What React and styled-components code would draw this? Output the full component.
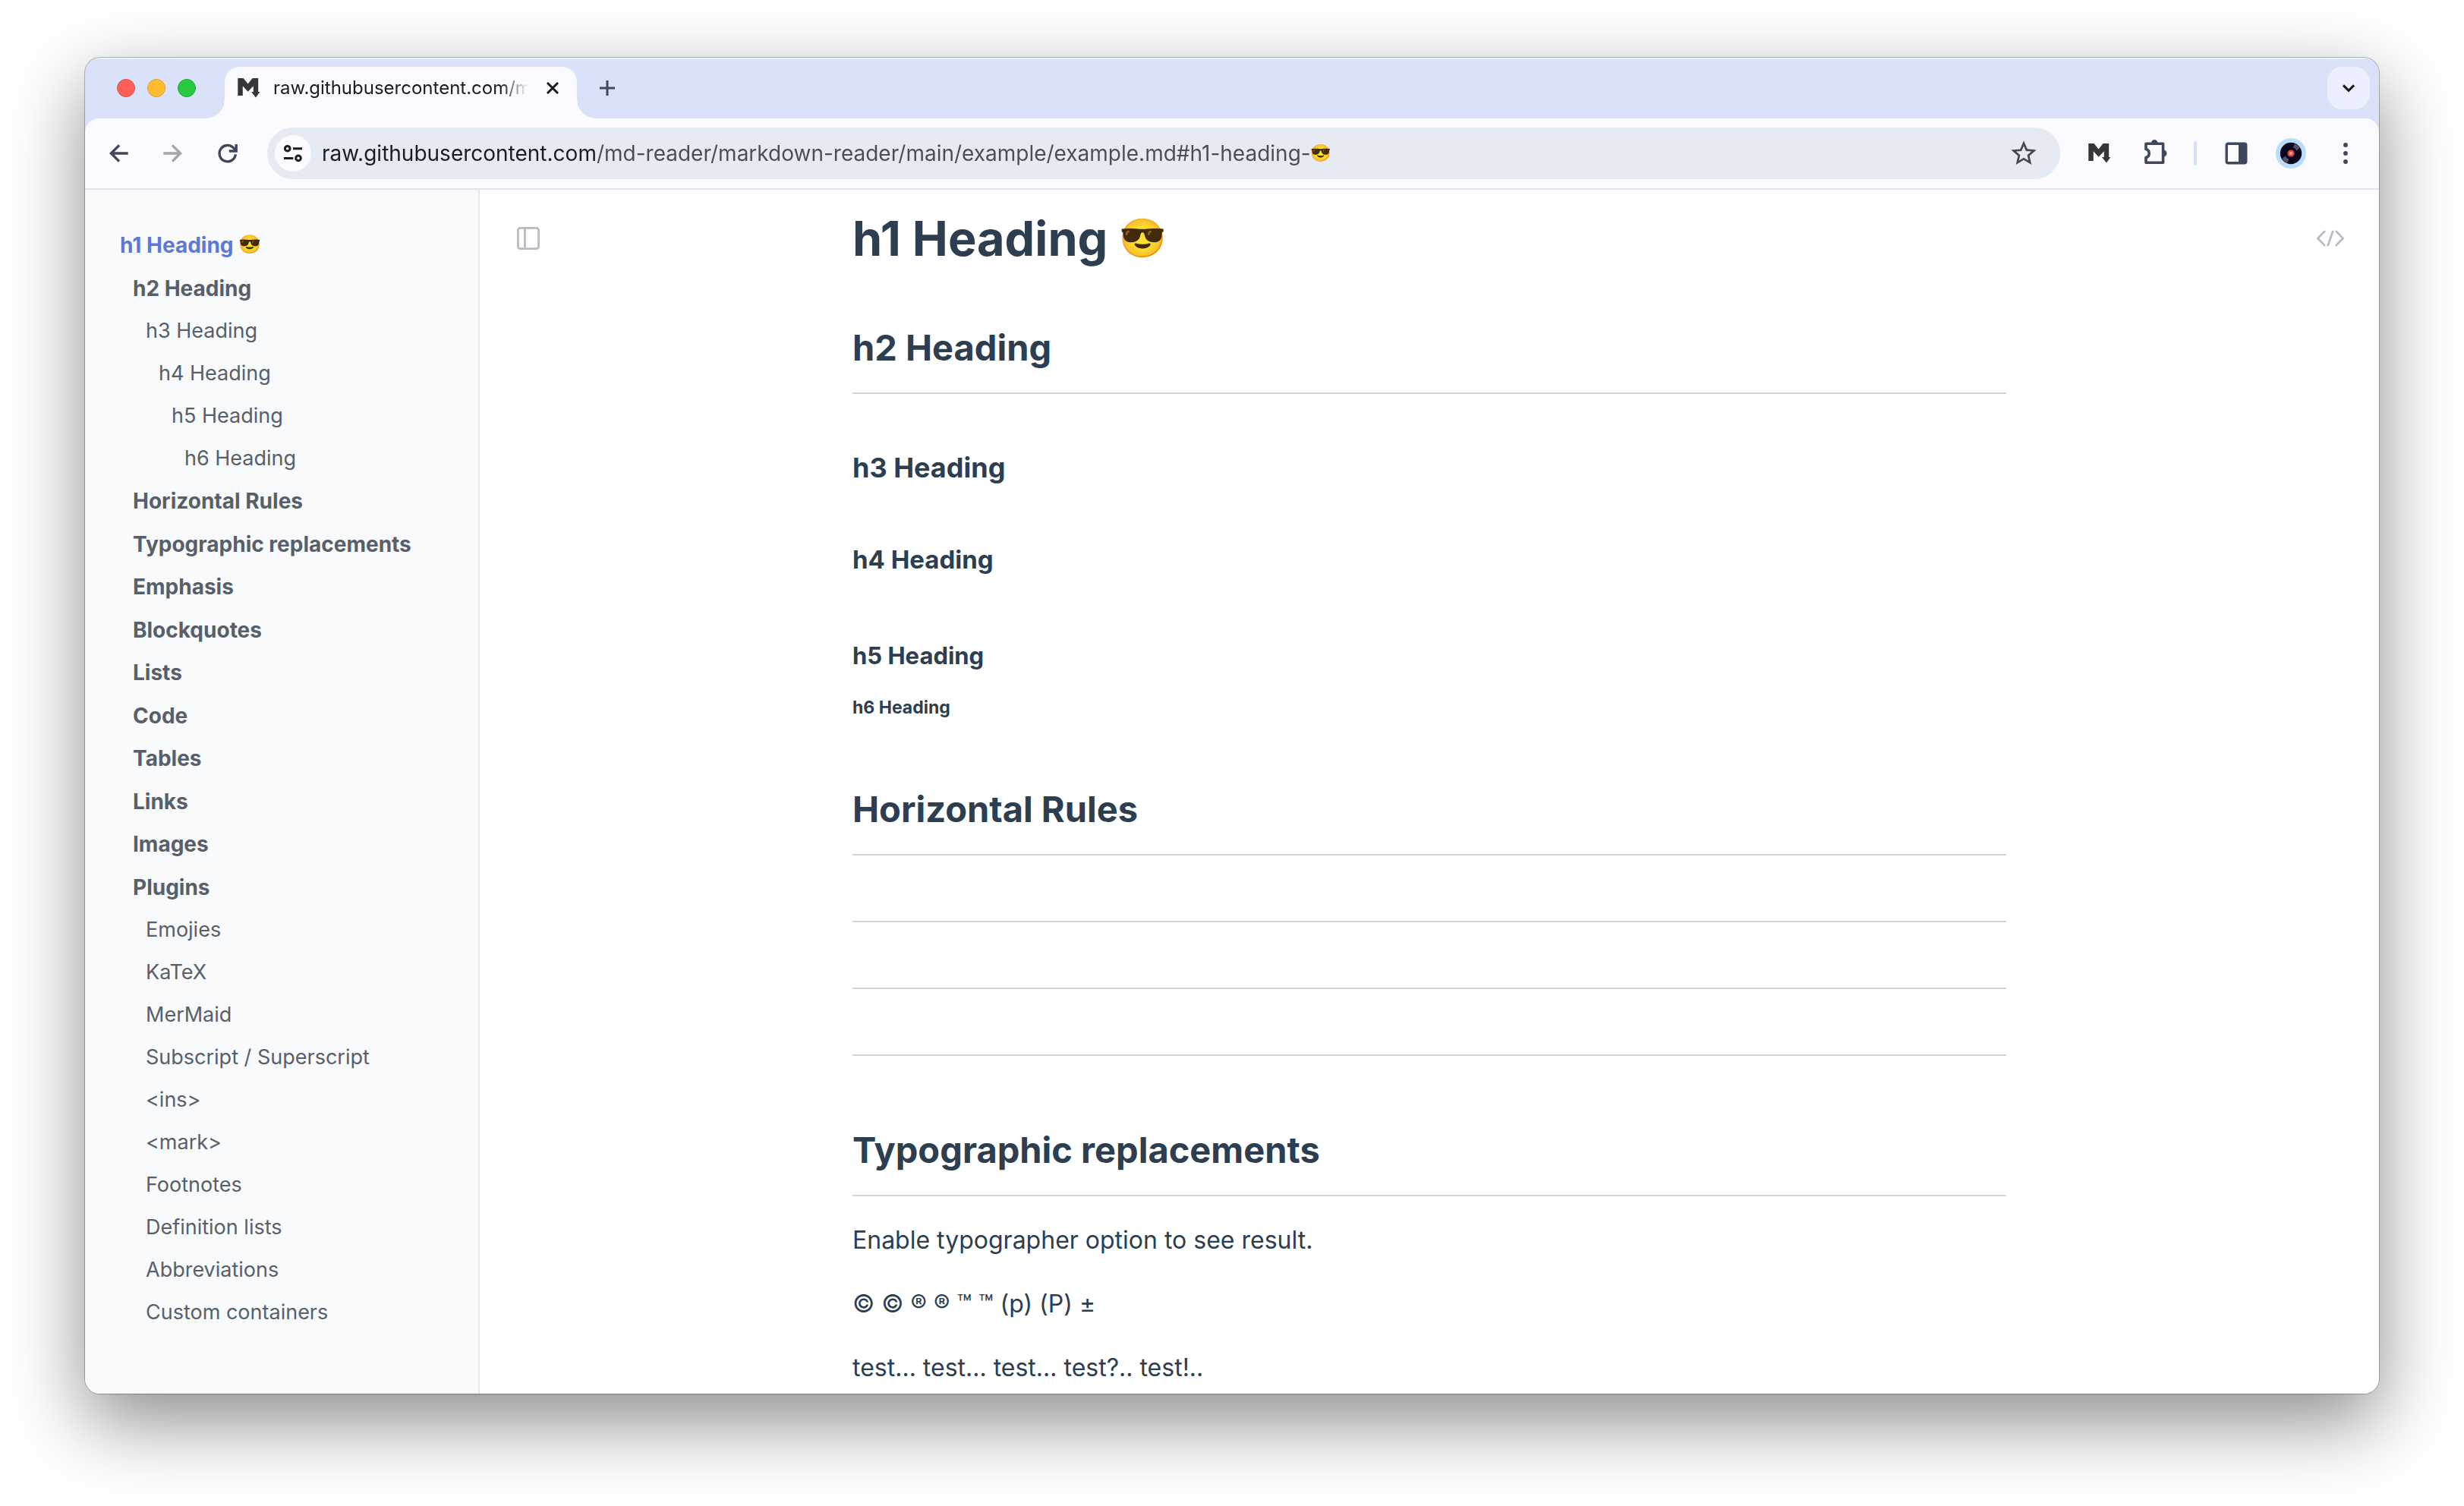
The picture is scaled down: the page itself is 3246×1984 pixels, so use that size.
import React from "react";
import styled, { createGlobalStyle, css } from "styled-components";

const GlobalStyle = createGlobalStyle`
  *, *::before, *::after { box-sizing: border-box; }
  body {
    margin: 0;
    background: #ffffff;
    font-family: Inter, "Noto Sans", "Liberation Sans", sans-serif;
    -webkit-font-smoothing: antialiased;
  }
`;

/* ---------- window ---------- */

const Desktop = styled.div`
  height: 100vh;
  padding: 76px 112px 148px;
  overflow: hidden;
`;

const Window = styled.div`
  display: flex;
  flex-direction: column;
  height: 100%;
  overflow: hidden;
  border-radius: 20px;
  background: #dae2fa;
  box-shadow:
    0 0 0 1px rgba(0, 0, 0, 0.26),
    0 36px 100px rgba(0, 0, 0, 0.46);
`;

/* ---------- tab strip ---------- */

const TabStrip = styled.header`
  display: flex;
  align-items: flex-end;
  height: 80px;
  flex-shrink: 0;
  padding: 0 12px 0 42px;
  box-shadow: inset 0 2px 1px rgba(255, 255, 255, 0.5);
`;

const TrafficLights = styled.div`
  display: flex;
  align-self: center;
  gap: 16px;
  margin-right: 38px;
`;

const Light = styled.button`
  width: 24px;
  height: 24px;
  padding: 0;
  border: 1px solid ${(p) => p.$edge};
  border-radius: 50%;
  background: ${(p) => p.$fill};
`;

const Tab = styled.div`
  position: relative;
  display: flex;
  align-items: center;
  gap: 16px;
  width: 464px;
  height: 68px;
  padding: 0 20px 12px 16px;
  border-radius: 20px 20px 0 0;
  background: #fafaff;

  &::before,
  &::after {
    content: "";
    position: absolute;
    bottom: 0;
    width: 24px;
    height: 24px;
  }
  &::before {
    right: 100%;
    background: radial-gradient(circle at 0 0, transparent 23px, #fafaff 24px);
  }
  &::after {
    left: 100%;
    background: radial-gradient(circle at 100% 0, transparent 23px, #fafaff 24px);
  }
`;

const TabTitle = styled.span`
  flex: 1;
  overflow: hidden;
  white-space: nowrap;
  color: #1b1c20;
  font-size: 24px;
  line-height: 32px;
  mask-image: linear-gradient(to right, #000 calc(100% - 40px), transparent calc(100% - 4px));
`;

const IconButton = styled.button`
  display: grid;
  place-items: center;
  flex-shrink: 0;
  width: ${(p) => p.$size || 56}px;
  height: ${(p) => p.$size || 56}px;
  padding: 0;
  border: 0;
  border-radius: 50%;
  background: transparent;
  color: ${(p) => p.$color || "#3f475a"};

  svg { display: block; }
`;

const NewTab = styled(IconButton)`
  margin: 0 auto 12px 12px;
`;

const TabSearch = styled(IconButton)`
  align-self: flex-start;
  margin-top: 12px;
  border-radius: 20px;
  background: #ecf0fe;
`;

/* ---------- toolbar ---------- */

const Toolbar = styled.div`
  display: flex;
  align-items: center;
  gap: 16px;
  height: 94px;
  flex-shrink: 0;
  padding: 0 16px;
  border-bottom: 2px solid #dfe3ec;
  border-radius: 18px 18px 0 0;
  background: #fafaff;
`;

const Omnibox = styled.form`
  display: flex;
  flex: 1;
  align-items: center;
  height: 68px;
  min-width: 0;
  margin: 0 8px;
  padding: 0 20px 0 10px;
  border-radius: 34px;
  background: #e6eaf3;
`;

const SiteInfo = styled(IconButton)`
  margin-right: 14px;
  background: #fafaff;
`;

const Address = styled.input`
  field-sizing: content;
  min-width: 0;
  padding: 0;
  border: 0;
  outline: 0;
  font: 400 28px/40px Inter, "Liberation Sans", sans-serif;
  color: transparent;
  caret-color: #1b1c20;
  background: linear-gradient(to right, #1b1c20 362px, #4a4d55 362px);
  background-clip: text;
  -webkit-background-clip: text;
`;

const Bookmark = styled(IconButton)`
  margin-left: auto;
`;

const Divider = styled.span`
  width: 4px;
  height: 32px;
  margin: 0 8px;
  border-radius: 2px;
  background: #d3e3fd;
`;

const Emoji = styled.span`
  font: 400 ${(p) => p.$size}px/1 "Noto Color Emoji", sans-serif;
  vertical-align: 12%;
`;

/* ---------- page ---------- */

const Page = styled.div`
  display: flex;
  flex: 1;
  min-height: 0;
  background: #ffffff;
`;

const Sidebar = styled.nav`
  width: 520px;
  flex-shrink: 0;
  overflow: hidden;
  padding: 45px 0 0 46px;
  border-right: 2px solid #e6e8eb;
  background: #f9fafc;
`;

const Toc = styled.ul`
  margin: 0;
  padding: 0;
  list-style: none;
`;

const TocItem = styled.li`
  padding-left: ${(p) => (p.$level - 1) * 17}px;

  a {
    display: block;
    color: ${(p) => (p.$active ? "#5c79d8" : "#57606a")};
    font-size: 27px;
    line-height: 56px;
    text-decoration: none;
    white-space: nowrap;
  }

  ${(p) =>
    p.$level < 3 &&
    css`
      a { font-size: 28px; font-weight: 700; }
      &:nth-child(odd) a { line-height: 57px; }
    `}
`;

const Reader = styled.main`
  display: grid;
  flex: 1;
  grid-template-columns: 1fr minmax(0, 1520px) 1fr;
  align-items: start;
  min-width: 0;
  overflow: hidden;
`;

const SideAction = styled(IconButton)`
  justify-self: ${(p) => p.$side};
  margin: 36px;
`;

const Article = styled.article`
  padding-top: 24px;
  color: #2c3e50;

  h1, h2, h3, h4, h5, h6 { margin: 0; font-weight: 700; }

  h1 { font-size: 63px; line-height: 80px; }
  h2 {
    margin-top: 90px;
    padding-bottom: 29px;
    border-bottom: 2px solid #d0d7de;
    font-size: 47px;
    line-height: 60px;
  }
  h1 + h2 { margin-top: 74px; }
  hr + h2 { margin-top: 94px; }
  h3 { margin-top: 75px; font-size: 36px; line-height: 44px; }
  h4 { margin-top: 79px; font-size: 33px; line-height: 40px; }
  h5 { margin-top: 87px; font-size: 31px; line-height: 40px; }
  h6 { margin-top: 34px; font-size: 23px; line-height: 28px; }
  hr { height: 2px; margin: 86px 0 0; border: 0; background: #d0d7de; }
  p { margin: 34px 0 0; font-size: 32px; line-height: 48px; white-space: nowrap; }
  p + p { margin-top: 36px; }
`;

/* ---------- icons ---------- */

const stroke = { fill: "none", stroke: "currentColor", strokeWidth: 3.4 };

const MarkdownLogo = () => (
  <svg width="32" height="32" viewBox="0 0 32 32" aria-hidden="true">
    <path
      fill="#35363a"
      d="M1.3 3H8.6L14.6 10.4 20.6 3H28.2V21H30.4L25 28.6 19 21H21.8V13.2L14.6 20.8 7.8 13.2V26H1.3Z"
    />
  </svg>
);

const Back = () => (
  <svg width="32" height="32" viewBox="0 0 32 32" {...stroke}>
    <path d="M28.7 16H6.4M17 5.4 6.4 16 17 26.6" />
  </svg>
);

const Forward = () => (
  <svg width="32" height="32" viewBox="0 0 32 32" {...stroke}>
    <path d="M3.3 16H25.6M15 5.4 25.6 16 15 26.6" />
  </svg>
);

const Reload = () => (
  <svg width="32" height="32" viewBox="0 0 32 32" {...stroke}>
    <path d="M26.4 17.4A10.7 10.7 0 1 1 23.6 8.8L27 12" />
    <path d="M27.2 4V13H17.8" />
  </svg>
);

const Tune = () => (
  <svg width="32" height="32" viewBox="0 0 32 32" fill="none" stroke="currentColor" strokeWidth="3">
    <circle cx="8.7" cy="9.7" r="3.3" />
    <path d="M16 9.7H28M4 22.6H16.3" />
    <circle cx="23" cy="22.4" r="3.3" />
  </svg>
);

const Star = () => (
  <svg width="40" height="40" viewBox="0 0 24 24" fill="currentColor">
    <path d="M22 9.24l-7.19-.62L12 2 9.19 8.63 2 9.24l5.46 4.73L5.82 21 12 17.27 18.18 21l-1.63-7.03L22 9.24zM12 15.4l-3.76 2.27 1-4.28-3.32-2.88 4.38-.38L12 6.1l1.71 4.04 4.38.38-3.32 2.88 1 4.28L12 15.4z" />
  </svg>
);

const Puzzle = () => (
  <svg width="40" height="40" viewBox="-1 0 40 40">
    <path
      d="M8 7.2H30.6V32.2H8V25.6C10.6 25 12.2 22.8 12.2 20S10.6 15 8 14.4Z"
      fill="none"
      stroke="currentColor"
      strokeWidth="3.6"
      strokeLinejoin="round"
    />
    <path d="M15 6.2a4.2 4.2 0 0 1 8.4 0ZM32 15.8a4.4 4.4 0 0 1 0 8.6Z" fill="currentColor" />
  </svg>
);

const SidePanel = () => (
  <svg width="32" height="32" viewBox="0 0 32 32">
    <rect x="3.2" y="3.2" width="25.6" height="25.6" rx="2" fill="none" stroke="currentColor" strokeWidth="3.4" />
    <path d="M19 2.6H28V29.4H19Z" fill="currentColor" />
  </svg>
);

const Avatar = () => (
  <svg width="40" height="40" viewBox="0 0 40 40">
    <circle cx="20" cy="20" r="20" fill="#b9defb" />
    <circle cx="20" cy="20" r="14.2" fill="#08061c" />
    <path d="M22.6 12.2 25 7.2A13.6 13.6 0 0 1 31.6 13L27.6 16.4A8 8 0 0 0 22.6 12.2Z" fill="#6c6d7b" opacity=".75" />
    <path d="M17.4 27.8 15 32.8A13.6 13.6 0 0 1 8.4 27L12.4 23.6A8 8 0 0 0 17.4 27.8Z" fill="#6c6d7b" opacity=".75" />
    <circle cx="20" cy="20" r="4.6" fill="#f2386b" />
    <circle cx="20" cy="20" r="2" fill="#ffc93c" />
  </svg>
);

const Dots = () => (
  <svg width="32" height="32" viewBox="0 0 32 32" fill="currentColor">
    <circle cx="16" cy="5" r="2.9" />
    <circle cx="16" cy="16" r="2.9" />
    <circle cx="16" cy="27" r="2.9" />
  </svg>
);

const Chevron = () => (
  <svg width="24" height="24" viewBox="0 0 24 24" fill="none" stroke="currentColor" strokeWidth="3">
    <path d="M5 8.4 12 15.4 19 8.4" />
  </svg>
);

const Plus = () => (
  <svg width="24" height="24" viewBox="0 0 24 24" fill="none" stroke="currentColor" strokeWidth="3">
    <path d="M12 2V22M2 12H22" />
  </svg>
);

const Close = () => (
  <svg width="24" height="24" viewBox="0 0 24 24" fill="none" stroke="currentColor" strokeWidth="3">
    <path d="M5 5 19 19M19 5 5 19" />
  </svg>
);

const PanelToggle = () => (
  <svg width="36" height="36" viewBox="0 0 36 36" fill="none" stroke="currentColor" strokeWidth="2.8">
    <rect x="4.4" y="4.4" width="27.2" height="27.2" rx="3" />
    <path d="M13.4 4.4V31.6" />
  </svg>
);

const Code = () => (
  <svg width="40" height="40" viewBox="0 0 40 40" fill="none" stroke="currentColor" strokeWidth="2.8" strokeLinecap="round" strokeLinejoin="round">
    <path d="M12.2 10.9 3.4 20l8.8 9.1M27.8 10.9 36.6 20l-8.8 9.1M23.2 10.9 16.8 29.1" />
  </svg>
);

/* ---------- content ---------- */

const toc = [
  [1, "h1 Heading", true],
  [2, "h2 Heading"],
  [3, "h3 Heading"],
  [4, "h4 Heading"],
  [5, "h5 Heading"],
  [6, "h6 Heading"],
  [2, "Horizontal Rules"],
  [2, "Typographic replacements"],
  [2, "Emphasis"],
  [2, "Blockquotes"],
  [2, "Lists"],
  [2, "Code"],
  [2, "Tables"],
  [2, "Links"],
  [2, "Images"],
  [2, "Plugins"],
  [3, "Emojies"],
  [3, "KaTeX"],
  [3, "MerMaid"],
  [3, "Subscript / Superscript"],
  [3, "<ins>"],
  [3, "<mark>"],
  [3, "Footnotes"],
  [3, "Definition lists"],
  [3, "Abbreviations"],
  [3, "Custom containers"],
];

const url =
  "raw.githubusercontent.com/md-reader/markdown-reader/main/example/example.md#h1-heading-";

export default function App() {
  return (
    <>
      <GlobalStyle />
      <Desktop>
        <Window>
          <TabStrip>
            <TrafficLights>
              <Light aria-label="Close window" $fill="#ff5f57" $edge="#e24b41" />
              <Light aria-label="Minimize window" $fill="#febc2e" $edge="#e0a028" />
              <Light aria-label="Zoom window" $fill="#28c840" $edge="#1dab2c" />
            </TrafficLights>
            <Tab>
              <MarkdownLogo />
              <TabTitle>raw.githubusercontent.com/m</TabTitle>
              <IconButton aria-label="Close tab" $size={24} $color="#1b1c20">
                <Close />
              </IconButton>
            </Tab>
            <NewTab aria-label="New tab">
              <Plus />
            </NewTab>
            <TabSearch aria-label="Search tabs" $color="#1b1c20">
              <Chevron />
            </TabSearch>
          </TabStrip>

          <Toolbar>
            <IconButton aria-label="Back"><Back /></IconButton>
            <IconButton aria-label="Forward" $color="#a4a6ac"><Forward /></IconButton>
            <IconButton aria-label="Reload"><Reload /></IconButton>
            <Omnibox onSubmit={(e) => e.preventDefault()}>
              <SiteInfo type="button" aria-label="Site information" $size={48} $color="#1b1c20">
                <Tune />
              </SiteInfo>
              <Address type="text" aria-label="Address" defaultValue={url} spellCheck={false} />
              <Emoji $size={22}>😎</Emoji>
              <Bookmark type="button" aria-label="Bookmark this page" $color="#474747">
                <Star />
              </Bookmark>
            </Omnibox>
            <IconButton aria-label="Markdown Reader"><MarkdownLogo /></IconButton>
            <IconButton aria-label="Extensions"><Puzzle /></IconButton>
            <Divider />
            <IconButton aria-label="Side panel"><SidePanel /></IconButton>
            <IconButton aria-label="Profile"><Avatar /></IconButton>
            <IconButton aria-label="Menu"><Dots /></IconButton>
          </Toolbar>

          <Page>
            <Sidebar aria-label="Table of contents">
              <Toc>
                {toc.map(([level, text, active]) => (
                  <TocItem key={text} $level={level} $active={active}>
                    <a href="#top">
                      {text}
                      {active && <> <Emoji $size={24}>😎</Emoji></>}
                    </a>
                  </TocItem>
                ))}
              </Toc>
            </Sidebar>

            <Reader>
              <SideAction aria-label="Toggle sidebar" $side="start" $color="#b9bbc2">
                <PanelToggle />
              </SideAction>
              <Article>
                <h1>h1 Heading <Emoji $size={50}>😎</Emoji></h1>
                <h2>h2 Heading</h2>
                <h3>h3 Heading</h3>
                <h4>h4 Heading</h4>
                <h5>h5 Heading</h5>
                <h6>h6 Heading</h6>
                <h2>Horizontal Rules</h2>
                <hr />
                <hr />
                <hr />
                <h2>Typographic replacements</h2>
                <p>Enable typographer option to see result.</p>
                <p>© © ® ® ™ ™ (p) (P) ±</p>
                <p>test… test… test… test?.. test!..</p>
              </Article>
              <SideAction aria-label="View source" $side="end" $color="#b9bbc2">
                <Code />
              </SideAction>
            </Reader>
          </Page>
        </Window>
      </Desktop>
    </>
  );
}
